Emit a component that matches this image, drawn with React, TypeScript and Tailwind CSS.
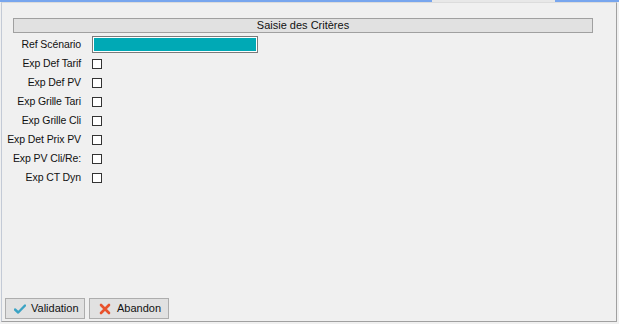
import React from "react";

const labels = [
  "Exp Def Tarif",
  "Exp Def PV",
  "Exp Grille Tari",
  "Exp Grille Cli",
  "Exp Det Prix PV",
  "Exp PV Cli/Re:",
  "Exp CT Dyn",
];

function Row({ label, children }: { label: string; children: React.ReactNode }) {
  return (
    <div className="flex h-[19px] items-center">
      <div className="w-[79px] text-right whitespace-nowrap text-[10.5px] tracking-[-0.1px]">{label}</div>
      <div className="ml-[11px] flex items-center">{children}</div>
    </div>
  );
}

export default function App() {
  return (
    <div
      className="w-[619px] h-[324px] bg-[#f0f0f0] flex flex-col text-[11px] text-[#111] overflow-hidden"
      style={{ fontFamily: '"Liberation Sans", Arial, sans-serif' }}
    >
      <div className="flex h-[2px] shrink-0">
        <div className="w-[432px] bg-[#78a6ee]" />
        <div className="w-[123px] bg-[#e8e8e8]" />
        <div className="flex-1 bg-[#78a6ee]" />
      </div>
      <div className="flex h-[320px] pl-[1px] pr-[2px]">
        <div className="flex-1 flex flex-col border-l border-[#c3cad6] border-r border-r-[#a0a0a0] border-b border-b-[#a0a0a0] border-t border-t-[#dcdcdc]">
          <div className="ml-[11px] mt-[15px] w-[580px] h-[15px] bg-[#e1e1e1] border border-[#a0a0a0] flex items-center justify-center leading-none">
            Saisie des Critères
          </div>
          <div className="mt-[2px] flex flex-col">
            <Row label="Ref Scénario">
              <div className="w-[166px] h-[17px] border border-[#7a7a7a] bg-white p-[1px]">
                <div className="w-full h-full bg-[#00a9b5]" />
              </div>
            </Row>
            {labels.map((l) => (
              <Row key={l} label={l}>
                <div className="w-[10px] h-[10px] border border-[#333333] bg-white" />
              </Row>
            ))}
          </div>
          <div className="mt-auto mb-[2px] ml-[3px] flex gap-[4px]">
            <button className="w-[80px] h-[21px] bg-[#e1e1e1] border border-[#adadad] flex items-center pl-[8px] gap-[5px]">
              <svg width="12" height="10" viewBox="0 0 12 10">
                <path d="M1 5.5 L4.2 8.5 L11 1.5" fill="none" stroke="#3ba3c4" strokeWidth="2.4" strokeLinecap="round" strokeLinejoin="round" />
              </svg>
              <span>Validation</span>
            </button>
            <button className="w-[80px] h-[21px] bg-[#e1e1e1] border border-[#adadad] flex items-center pl-[9px] gap-[6px]">
              <svg width="12" height="12" viewBox="0 0 12 12">
                <path d="M2 2 L10 10 M10 2 L2 10" fill="none" stroke="#e8522c" strokeWidth="2.6" strokeLinecap="round" />
              </svg>
              <span>Abandon</span>
            </button>
          </div>
        </div>
      </div>
      <div className="flex-1" />
    </div>
  );
}
